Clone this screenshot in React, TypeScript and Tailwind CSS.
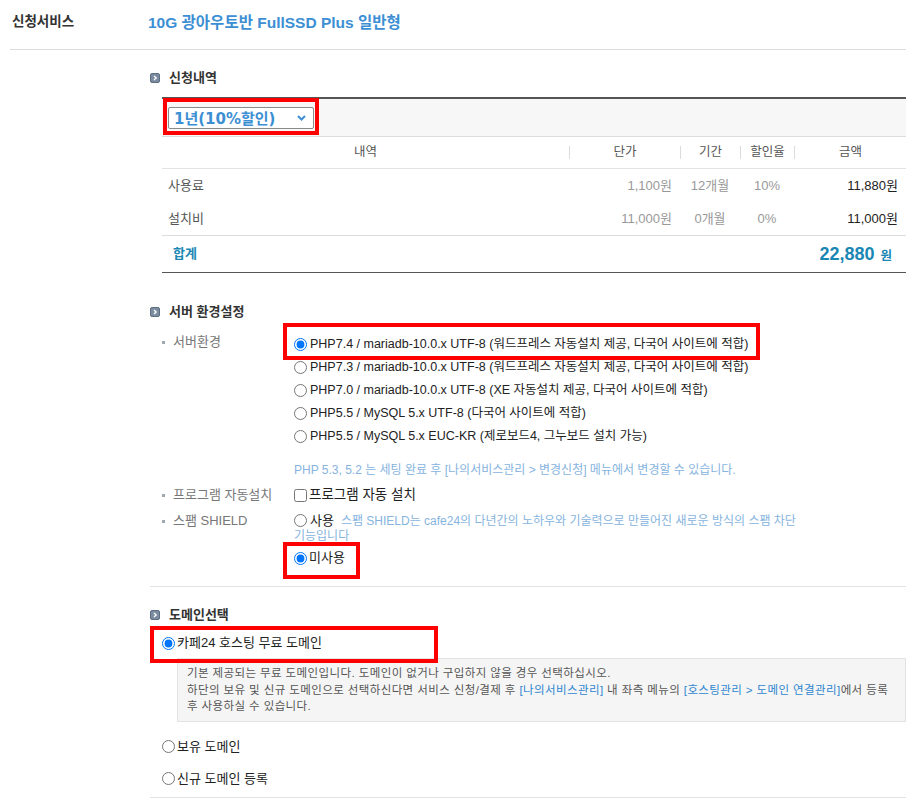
import React from "react";

const SectionTitle = ({ title }: { title: string }) => (
  <div className="flex h-[16px] items-center gap-[9px]">
    <svg width="10" height="10" viewBox="0 0 10 10">
      <rect x="0.5" y="0.5" width="9" height="9" rx="1.5" fill="#7b8ca0" stroke="#5f6f82" />
      <path d="M4 3 L6.2 5 L4 7" fill="none" stroke="#fff" strokeWidth="1.3" />
    </svg>
    <span className="text-[13px] font-bold text-[#333]">{title}</span>
  </div>
);

const RedBox = ({ className }: { className: string }) => (
  <div className={"pointer-events-none absolute border-4 border-[#ff0000] " + className} />
);

const Radio = ({ name, checked }: { name: string; checked?: boolean }) => (
  <input type="radio" name={name} defaultChecked={checked} className="m-0 h-[13px] w-[13px] shrink-0" />
);

const Label = ({ text }: { text: string }) => (
  <div className="flex h-[16px] w-[132px] shrink-0 items-center gap-[8px] text-[13px] text-[#777]">
    <span className="h-[3px] w-[3px] bg-[#a0a8b0]" />
    <span>{text}</span>
  </div>
);

const phpOptions = [
  "PHP7.4 / mariadb-10.0.x UTF-8 (워드프레스 자동설치 제공, 다국어 사이트에 적합)",
  "PHP7.3 / mariadb-10.0.x UTF-8 (워드프레스 자동설치 제공, 다국어 사이트에 적합)",
  "PHP7.0 / mariadb-10.0.x UTF-8 (XE 자동설치 제공, 다국어 사이트에 적합)",
  "PHP5.5 / MySQL 5.x UTF-8 (다국어 사이트에 적합)",
  "PHP5.5 / MySQL 5.x EUC-KR (제로보드4, 그누보드 설치 가능)",
];

export default function App() {
  return (
    <div className="min-h-[798px] w-[915px] bg-white pl-[10px] pr-[9px] font-['Liberation_Sans','Noto_Sans_CJK_KR',sans-serif] text-[12px] text-[#222]">
      {/* service row */}
      <div className="flex h-[50px] items-center border-b border-[#dcdcdc] pb-[4px]">
        <div className="w-[138px] pl-[2px] text-[13.5px] font-bold text-[#333]">신청서비스</div>
        <div className="text-[15.5px] font-bold text-[#3d8fd4]">10G 광아우토반 FullSSD Plus 일반형</div>
      </div>

      <div className="pl-[140px]">
        {/* 신청내역 */}
        <div className="mt-[20px]">
          <SectionTitle title="신청내역" />
        </div>
        <div className="ml-[12px] mt-[11px] border-t-2 border-[#555]">
          <div className="h-[38px] border-b border-[#dcdcdc] bg-[#f7f7f7] pl-[6px] pt-[8px]">
            <div className="relative w-[146px]">
              <select className="h-[22px] w-[146px] appearance-none rounded-[2px] border border-[#8a8a8a] bg-white pl-[5px] font-['DejaVu_Sans','Noto_Sans_CJK_KR',sans-serif] text-[15px] font-bold text-[#3d8fd4] outline-none">
                <option>1년(10%할인)</option>
              </select>
              <svg className="pointer-events-none absolute left-[129px] top-[8px]" width="9" height="6" viewBox="0 0 9 6">
                <path d="M1 1 L4.5 4.5 L8 1" fill="none" stroke="#3d8fd4" strokeWidth="2" />
              </svg>
              <RedBox className="left-[-5px] top-[-9px] h-[37px] w-[156px]" />
            </div>
          </div>

          <div className="grid h-[32px] grid-cols-[407px_111px_60px_54px_112px] border-b border-[#e3e3e3] text-[12.5px] text-[#555]">
            <div className="flex items-center justify-center">내역</div>
            {["단가", "기간", "할인율", "금액"].map((h) => (
              <div key={h} className="flex items-center">
                <span className="h-[13px] w-px bg-[#dcdcdc]" />
                <span className="flex-1 text-center">{h}</span>
              </div>
            ))}
          </div>

          {[
            ["사용료", "1,100원", "12개월", "10%", "11,880원"],
            ["설치비", "11,000원", "0개월", "0%", "11,000원"],
          ].map((r) => (
            <div key={r[0]} className="grid h-[33px] grid-cols-[407px_111px_60px_54px_112px] items-center text-[13px]">
              <div className="pl-[6px] text-[#555]">{r[0]}</div>
              <div className="pr-[8px] text-right text-[#999]">{r[1]}</div>
              <div className="text-center text-[#999]">{r[2]}</div>
              <div className="text-center text-[#999]">{r[3]}</div>
              <div className="pr-[8px] text-right text-[#222]">{r[4]}</div>
            </div>
          ))}

          <div className="flex h-[38px] items-center justify-between border-y border-t-[#dcdcdc] border-b-[#555] pl-[11px] pr-[14px]">
            <span className="text-[13px] font-bold text-[#1a87b4]">합계</span>
            <span className="font-bold text-[#1a87b4]">
              <span className="text-[18px]">22,880</span>
              <span className="ml-[6px] text-[12.5px]">원</span>
            </span>
          </div>
        </div>

        {/* 서버 환경설정 */}
        <div className="mt-[31px]">
          <SectionTitle title="서버 환경설정" />
        </div>
        <div className="ml-[12px] mt-[13px] flex">
          <div className="pt-[1px]">
            <Label text="서버환경" />
          </div>
          <div>
            {phpOptions.map((o, i) => (
              <div key={o} className="relative flex h-[23px] items-center gap-[3px] text-[12.5px]">
                <Radio name="php" checked={i === 0} />
                <span>{o}</span>
                {i === 0 && <RedBox className="left-[-11px] top-[-10px] h-[37px] w-[477px]" />}
              </div>
            ))}
          </div>
        </div>
        <div className="ml-[144px] mt-[14px] flex h-[16px] items-center text-[12px] text-[#86b4de]">
          PHP 5.3, 5.2 는 세팅 완료 후 [나의서비스관리 &gt; 변경신청] 메뉴에서 변경할 수 있습니다.
        </div>
        <div className="ml-[12px] mt-[6px] flex h-[22px] items-center">
          <Label text="프로그램 자동설치" />
          <label className="flex items-center gap-[2px]">
            <input type="checkbox" className="m-0 h-[13px] w-[13px]" />
            <span className="text-[13.5px]">프로그램 자동 설치</span>
          </label>
        </div>
        <div className="ml-[12px] mt-[7px] flex">
          <Label text="스팸 SHIELD" />
          <div className="w-[512px]">
            <div className="leading-[15px]">
              <input type="radio" name="spam" className="m-0 mr-[3px] h-[13px] w-[13px] align-[-2px]" />
              <span className="text-[13px]">사용</span>
              <span className="ml-[7px] text-[12px] text-[#86b4de]">
                스팸 SHIELD는 cafe24의 다년간의 노하우와 기술력으로 만들어진 새로운 방식의 스팸 차단 기능입니다
              </span>
            </div>
            <div className="relative mt-[3px] flex h-[22px] items-center gap-[2px]">
              <Radio name="spam" checked />
              <span className="text-[13px]">미사용</span>
              <RedBox className="left-[-11px] top-[-5px] h-[37px] w-[77px]" />
            </div>
          </div>
        </div>
        <div className="mt-[17px] border-b border-[#e3e3e3]" />

        {/* 도메인선택 */}
        <div className="mt-[20px]">
          <SectionTitle title="도메인선택" />
        </div>
        <div className="relative ml-[12px] mt-[9px] flex h-[22px] items-center gap-[2px]">
          <Radio name="domain" checked />
          <span className="text-[13px]">카페24 호스팅 무료 도메인</span>
          <RedBox className="left-[-12px] top-[-6px] h-[37px] w-[288px]" />
        </div>
        <div className="ml-[27px] mt-[4px] break-all border border-[#e3e3e3] bg-[#f5f5f5] px-[9px] py-[6px] text-[11.5px] leading-[16.5px] tracking-[0.4px] text-[#555]">
          기본 제공되는 무료 도메인입니다. 도메인이 없거나 구입하지 않을 경우 선택하십시오.
          <br />
          하단의 보유 및 신규 도메인으로 선택하신다면 서비스 신청/결제 후{" "}
          <span className="inline-block h-[16.5px] text-[#2f86d0]">[나의서비스관리]</span> 내 좌측 메뉴의{" "}
          <span className="inline-block h-[16.5px] text-[#2f86d0]">[호스팅관리 &gt; 도메인 연결관리]</span>에서 등록 후 사용하실 수 있습니다.
        </div>
        <div className="border-b border-[#e3e3e3] pb-[7px]">
          <div className="ml-[12px] mt-[14px] flex h-[22px] items-center gap-[2px]">
            <Radio name="domain" />
            <span className="text-[13px]">보유 도메인</span>
          </div>
          <div className="ml-[12px] mt-[10px] flex h-[22px] items-center gap-[2px]">
            <Radio name="domain" />
            <span className="text-[13px]">신규 도메인 등록</span>
          </div>
        </div>
      </div>
    </div>
  );
}
